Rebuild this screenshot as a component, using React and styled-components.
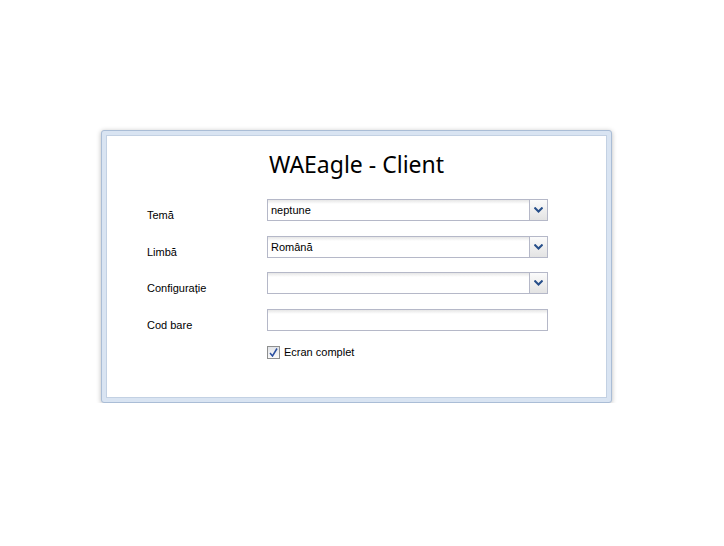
import React from "react";
import styled, { createGlobalStyle } from "styled-components";

const GlobalStyle = createGlobalStyle`
  html, body {
    margin: 0;
    background: #ffffff;
  }
`;

const Page = styled.div`
  padding: 130px 0 0 101px;
`;

const Window = styled.div`
  width: 511px;
  box-sizing: border-box;
  border: 1px solid #aabdd6;
  border-radius: 3px;
  background: #d9e4f2;
  padding: 4px;
  box-shadow: 0 1px 5px rgba(0, 0, 0, 0.28);
`;

const Body = styled.div`
  background: #ffffff;
  border: 1px solid #c3d1e3;
  height: 263px;
  box-sizing: border-box;
  padding: 13px 0 0 40px;
`;

const Title = styled.h1`
  margin: 0 0 20px -40px;
  text-align: center;
  font-family: "Noto Sans", "Open Sans", sans-serif;
  font-weight: 400;
  font-size: 23px;
  line-height: 30px;
  color: #000;
`;

const Form = styled.div`
  display: grid;
  grid-template-columns: 120px 281px;
  row-gap: 14.67px;
  align-items: start;
`;

const Label = styled.label`
  font-family: "Liberation Sans", Arial, sans-serif;
  font-size: 11px;
  color: #000;
  padding-top: 10px;
  line-height: 12px;
`;

const Field = styled.div`
  display: flex;
  height: 22px;
  box-sizing: border-box;
  border: 1px solid #b5b8c8;
  background: linear-gradient(#e6e6e6, #ffffff 4px);
`;

const Value = styled.span`
  flex: 1;
  font-family: "Liberation Sans", Arial, sans-serif;
  font-size: 11px;
  line-height: 20px;
  padding-left: 3px;
  color: #000;
`;

const Trigger = styled.span`
  width: 17px;
  border-left: 1px solid #b5b8c8;
  background: linear-gradient(#fbfbfb, #e3e3e3);
  display: flex;
  align-items: center;
  justify-content: center;
`;

const CheckRow = styled.div`
  grid-column: 2;
  display: flex;
  align-items: center;
  gap: 4px;
`;

const Box = styled.span`
  width: 13px;
  height: 13px;
  box-sizing: border-box;
  border: 1px solid #8e8f8f;
  background: linear-gradient(#e2e4e8, #fafafa);
  display: flex;
  align-items: center;
  justify-content: center;
`;

const CheckText = styled.span`
  font-family: "Liberation Sans", Arial, sans-serif;
  font-size: 11px;
  color: #000;
`;

const Chevron = () => (
  <svg width="9" height="6" viewBox="0 0 9 6">
    <path d="M0.5 0.5 L4.5 4.5 L8.5 0.5" fill="none" stroke="#274f8a" strokeWidth="2" />
  </svg>
);

const Tick = () => (
  <svg width="9" height="9" viewBox="0 0 9 9">
    <path d="M1 5 L3.5 8 L8 0.5" fill="none" stroke="#2a4fa0" strokeWidth="1.5" />
  </svg>
);

const Combo = ({ value }) => (
  <Field>
    <Value>{value}</Value>
    <Trigger>
      <Chevron />
    </Trigger>
  </Field>
);

const App = () => (
  <Page>
    <GlobalStyle />
    <Window>
      <Body>
        <Title>WAEagle - Client</Title>
        <Form>
          <Label>Temă</Label>
          <Combo value="neptune" />
          <Label>Limbă</Label>
          <Combo value="Română" />
          <Label>Configurație</Label>
          <Combo value="" />
          <Label>Cod bare</Label>
          <Field>
            <Value />
          </Field>
          <CheckRow>
            <Box>
              <Tick />
            </Box>
            <CheckText>Ecran complet</CheckText>
          </CheckRow>
        </Form>
      </Body>
    </Window>
  </Page>
);

export default App;
